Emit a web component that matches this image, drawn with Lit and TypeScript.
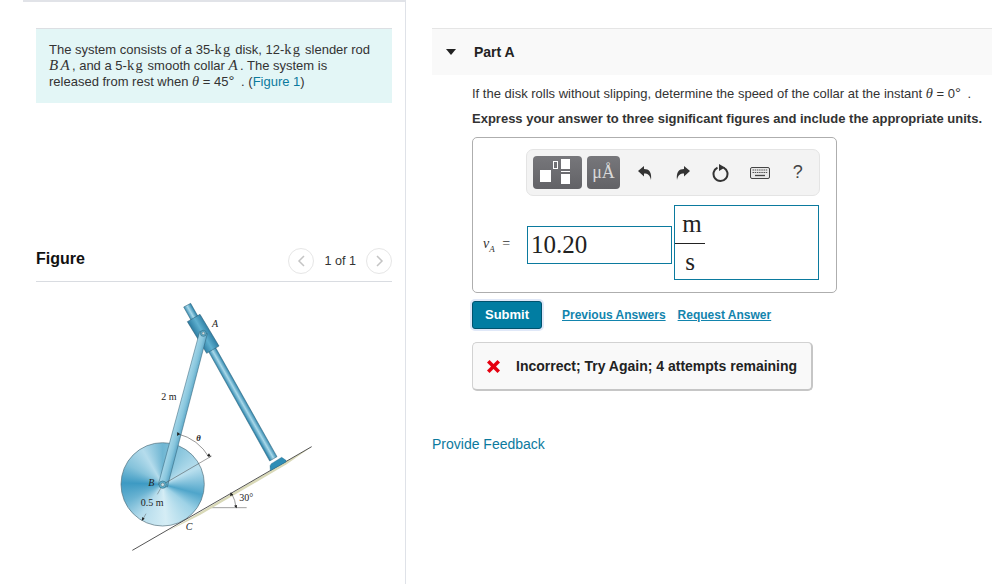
import { LitElement, html, css, svg } from "lit";
import { customElement } from "lit/decorators.js";

const diagram = svg`
<defs>
  <linearGradient id="rodG" gradientUnits="userSpaceOnUse" x1="381.6" y1="280.900" x2="402.400" y2="269.100"><stop offset="0" stop-color="#2f86ad"/><stop offset=".5" stop-color="#a9d9ea"/><stop offset="1" stop-color="#2f86ad"/></linearGradient>
  <linearGradient id="linkG" gradientUnits="userSpaceOnUse" x1="235.500" y1="350.400" x2="262.500" y2="357.600"><stop offset="0" stop-color="#a8d8ea"/><stop offset=".6" stop-color="#88c6dd"/><stop offset="1" stop-color="#5fa9c9"/></linearGradient>
  <linearGradient id="colG" gradientUnits="userSpaceOnUse" x1="289" y1="140" x2="331" y2="116"><stop offset="0" stop-color="#2a7aa0"/><stop offset=".5" stop-color="#5fb0cf"/><stop offset="1" stop-color="#2a7aa0"/></linearGradient>
</defs>
<foreignObject x="63" y="455" width="250" height="250"><div xmlns="http://www.w3.org/1999/xhtml" class="disk"></div></foreignObject>
<circle cx="188" cy="580" r="125" fill="none" stroke="#4c6b79" stroke-width="2"/>
<path d="M332 650 L440 650" stroke="#444" stroke-width="1.500" fill="none"/>
<path d="M200 722 L635 467 L560 520 L300 672 Z" fill="#d9d9b8"/>
<path d="M97 778 L635 467" stroke="#333" stroke-width="2.500"/>
<path d="M510 524 L514 518 L545 499 L558 508 L558 513 L511 539 Z" fill="#2f8db5" stroke="#1d5f7c"/>
<path d="M251 48 L272 37 L531 497 L509 510 Z" fill="url(#rodG)" stroke="#2d5c72" stroke-width="1.500"/>
<path d="M262 92 L300 70 L357 165 L320 187 Z" fill="url(#colG)" stroke="#22536a" stroke-width="1.500"/>
<path d="M299 122 L322 128 L202 588 L175 580 Z" fill="url(#linkG)" stroke="#2d5c72" stroke-width="1.500"/>
<circle cx="310" cy="127" r="9" fill="#5fb0cd" stroke="#23566c" stroke-width="1.500"/>
<circle cx="310" cy="127" r="4" fill="#cfe3ea" stroke="#333"/>
<circle cx="188" cy="581" r="11" fill="#5fb0cd" stroke="#23566c" stroke-width="1.500"/>
<circle cx="188" cy="581" r="5" fill="#cfe3ea" stroke="#333"/>
<path d="M198 575 L335 495" stroke="#444" stroke-width="1.500"/>
<path d="M232 428 A155 155 0 0 1 328 500" stroke="#333" stroke-width="1.500" fill="none"/>
<path d="M182 592 L172 610 M138 668 L128 686" stroke="#444" stroke-width="1.200"/>
<path d="M395 608 A95 95 0 0 1 408 650" stroke="#333" stroke-width="1.500" fill="none"/>
<g fill="#222">
  <path d="M232 423 l-1 12 l9 -6z M333 497 l-12 -2 l6 -8z M125 690 l2 -12 l7 5z M392 604 l8 8 l-10 3z M410 652 l-8 -8 l9 -2z"/>
</g>
<g font-family="'Liberation Serif',serif" fill="#222" font-size="30">
  <text x="184" y="326">2 m</text>
  <text x="122" y="645">0.5 m</text>
  <text x="418" y="631">30°</text>
  <text x="336" y="108" font-style="italic">A</text>
  <text x="145" y="585" font-style="italic">B</text>
  <text x="257" y="716" font-style="italic">C</text>
  <text x="289" y="451" font-style="italic" font-weight="bold" font-size="26">θ</text>
</g>`;

@customElement("app-root")
export class AppRoot extends LitElement {
  static styles = css`
    :host { display: block; width: 992px; height: 584px; overflow: hidden; background: #fff; color: #2b2b2b; font-family: "Liberation Sans", Arial, sans-serif; font-size: 13px; }
    .page { display: flex; height: 584px; }
    .left { width: 405px; height: 584px; border-right: 1px solid #dfe2e8; flex: none; }
    .topline { height: 2px; margin: 0 0 0 23px; background: #e1e3e8; }
    .info { margin: 26px 13px 0 36px; height: 75px; box-sizing: border-box; border-top: 1px solid #dcdfe3; background: #e3f6f6; padding: 13px 13px 0; line-height: 16px; font-size: 13px; color: #333; white-space: nowrap; }
    .ms { font-family: "Liberation Serif", serif; font-size: 14.500px; letter-spacing: 1.300px; line-height: 0; }
    .mi { font-family: "Liberation Serif", serif; font-style: italic; font-size: 15px; letter-spacing: 2.300px; line-height: 0; }
    .th { font-family: "Liberation Serif", serif; font-style: italic; font-size: 14.500px; line-height: 0; }
    .deg { font-size: 15px; line-height: 0; margin-right: 3px; }
    .link { color: #0b7a9e; }
    .fighead { display: flex; align-items: center; margin: 130px 13px 0 36px; height: 48px; border-bottom: 1px solid #d9dce1; }
    .fighead b { font-size: 16px; color: #111; flex: 1; position: relative; top: 2px; }
    .pager { display: flex; align-items: center; gap: 10px; font-size: 12.600px; color: #333; position: relative; top: 4px; }
    .circ { width: 24px; height: 24px; border: 1px solid #e6e6e6; border-radius: 50%; display: flex; align-items: center; justify-content: center; }
    .figure { display: block; margin: 9px 0 0 100px; width: 230px; height: 270px; }
    .disk { width: 250px; height: 250px; border-radius: 50%; background: conic-gradient(#6fb6d3 0deg, #8cc7de 30deg, #b9dfee 65deg, #4fa5ca 105deg, #9ed2e6 130deg, #d5edf5 175deg, #b5dcec 215deg, #6ab3d2 245deg, #3d9ac3 272deg, #86c3db 300deg, #b5dcec 330deg, #6fb6d3 360deg); }
    .right { flex: 1; padding-left: 26px; }
    .parthead { display: flex; align-items: center; margin-top: 28px; height: 47px; box-sizing: border-box; border-top: 1px solid #e5e5e5; background: #f9f9f9; font-weight: bold; font-size: 14px; color: #222; }
    .tri { width: 0; height: 0; margin: 0 18px 0 14px; border-left: 5.500px solid transparent; border-right: 5.500px solid transparent; border-top: 6px solid #222; }
    .body { padding-left: 40px; }
    .q { margin-top: 11px; height: 16px; line-height: 16px; font-size: 13px; color: #333; white-space: nowrap; }
    .q2 { margin-top: 9px; height: 16px; line-height: 16px; font-size: 13px; font-weight: bold; color: #333; white-space: nowrap; }
    .answer { margin-top: 10px; width: 365px; height: 156px; box-sizing: border-box; border: 1px solid #aeaeae; border-radius: 5px; padding: 11px 0 0 53px; }
    .toolbar { display: flex; align-items: center; width: 294px; height: 47px; box-sizing: border-box; border: 1px solid #e4e4e4; border-radius: 7px; background: #f3f3f3; padding-left: 6px; }
    .tbtn { height: 33px; border-radius: 4px; background: linear-gradient(#77777b, #626266); display: flex; align-items: center; justify-content: center; flex: none; }
    .t1 { width: 49px; margin-right: 5px; }
    .t2 { width: 33px; color: #d9d9d9; font-family: "Liberation Serif", serif; font-size: 18px; margin-right: 6px; }
    .tool { width: 38.200px; display: flex; justify-content: center; flex: none; }
    .help { font-size: 18px; color: #444; }
    .entry { display: flex; align-items: flex-start; margin: 9px 0 0 -43px; }
    .label { width: 44px; margin-top: 31px; font-family: "Liberation Serif", serif; font-style: italic; font-size: 14px; color: #333; white-space: nowrap; }
    .label sub { font-size: 9px; line-height: 0; }
    .label span { font-style: normal; margin-left: 4px; }
    .input { width: 145px; height: 38px; margin-top: 21px; box-sizing: border-box; border: 1px solid #0b7a9e; font-family: "Liberation Serif", serif; font-size: 25px; line-height: 36px; padding-left: 3px; color: #222; }
    .unit { width: 145px; height: 75px; box-sizing: border-box; margin-left: 2px; border: 1px solid #0b7a9e; font-family: "Liberation Serif", serif; font-size: 25px; color: #222; }
    .frac { width: 30px; display: flex; flex-direction: column; align-items: center; }
    .frac div { height: 37px; width: 100%; text-align: center; line-height: 36px; }
    .frac .num { border-bottom: 1px solid #222; height: 38px; box-sizing: border-box; text-indent: 4px; white-space: nowrap; }
    .actions { display: flex; align-items: center; margin-top: 7px; height: 29px; }
    .submit { width: 70px; height: 28px; box-sizing: border-box; border: 1px solid #00536e; border-radius: 3px; background: #017da2; color: #fff; font-weight: bold; font-size: 13px; display: flex; align-items: center; justify-content: center; box-shadow: 0 0 0 2px #e0e8f8; margin-right: 20px; }
    .alink { color: #1284ad; font-size: 12px; font-weight: bold; text-decoration: underline; margin-right: 12px; }
    .fb { display: flex; align-items: center; margin-top: 13px; width: 341px; height: 49px; box-sizing: border-box; border: 1px solid #d2d2d2; border-bottom: 2px solid #c6c6c6; border-right: 2px solid #c6c6c6; border-radius: 5px; background: #f9f9f9; padding-left: 13px; font-weight: bold; font-size: 14px; color: #222; }
    .fb svg { margin-right: 15px; flex: none; }
    .provide { margin-top: 44px; font-size: 14px; line-height: 18px; color: #0b7a9e; }
  `;

  render() {
    return html`<div class="page">
      <div class="left">
        <div class="topline"></div>
        <div class="info">The system consists of a 35-<span class="ms">kg</span> disk, 12-<span class="ms">kg</span> slender rod<br>
          <span class="mi">BA</span>, and a 5-<span class="ms">kg</span> smooth collar <span class="mi">A</span>. The system is<br>
          released from rest when <span class="th">θ</span> = 45<span class="deg">°</span> . (<span class="link">Figure 1</span>)</div>
        <div class="fighead"><b>Figure</b>
          <div class="pager">
            <span class="circ"><svg width="9" height="12" viewBox="0 0 9 12"><path d="M7 1 L2 6 L7 11" fill="none" stroke="#c4c4c4" stroke-width="1.500"/></svg></span>
            <span>1 of 1</span>
            <span class="circ"><svg width="9" height="12" viewBox="0 0 9 12"><path d="M2 1 L7 6 L2 11" fill="none" stroke="#c4c4c4" stroke-width="1.500"/></svg></span>
          </div>
        </div>
        <svg class="figure" viewBox="0 0 690 810">${diagram}</svg>
      </div>
      <div class="right">
        <div class="parthead"><span class="tri"></span>Part A</div>
        <div class="body">
          <div class="q">If the disk rolls without slipping, determine the speed of the collar at the instant <span class="th">θ</span> = 0<span class="deg">°</span> .</div>
          <div class="q2">Express your answer to three significant figures and include the appropriate units.</div>
          <div class="answer">
            <div class="toolbar">
              <div class="tbtn t1"><svg width="49" height="33" viewBox="0 0 49 33">
                <rect x="7" y="14" width="11" height="12" fill="#fff"/>
                <rect x="20.500" y="5.500" width="4" height="7" fill="none" stroke="#fff"/>
                <rect x="28" y="3" width="9" height="10" fill="#fff"/>
                <rect x="28" y="15" width="9" height="1" fill="#fff"/>
                <rect x="28" y="18" width="9" height="10" fill="#fff"/>
              </svg></div>
              <div class="tbtn t2">μÅ</div>
              <div class="tool"><svg width="16" height="16" viewBox="0 0 16 16"><path d="M1 6 L7 1 L7 4 C12 4 15 7 14 15 C13 10 11 8.500 7 8.500 L7 11.500 Z" fill="#333"/></svg></div>
              <div class="tool"><svg width="16" height="16" viewBox="0 0 16 16"><path d="M15 6 L9 1 L9 4 C4 4 1 7 2 15 C3 10 5 8.500 9 8.500 L9 11.500 Z" fill="#333"/></svg></div>
              <div class="tool"><svg width="18" height="18" viewBox="0 0 18 18"><path d="M11.500 3.600 A7 7 0 1 1 5.500 3.600" fill="none" stroke="#333" stroke-width="2"/><path d="M7 0 L13 3.500 L7 7 Z" fill="#333"/></svg></div>
              <div class="tool"><svg width="20" height="12" viewBox="0 0 20 12"><rect x=".5" y=".5" width="19" height="11" rx="1.500" fill="#e8e8e8" stroke="#444"/><path d="M2.500 3 H17.500 M2.500 5.500 H17.500" stroke="#555" stroke-dasharray="1.500 .7"/><path d="M5 8.500 H15" stroke="#444" stroke-width="1.300"/></svg></div>
              <div class="tool help">?</div>
            </div>
            <div class="entry">
              <span class="label">v<sub>A</sub><span> =</span></span>
              <div class="input">10.20</div>
              <div class="unit"><div class="frac"><div class="num">m</div><div>s</div></div></div>
            </div>
          </div>
          <div class="actions">
            <span class="submit">Submit</span>
            <span class="alink">Previous Answers</span>
            <span class="alink">Request Answer</span>
          </div>
          <div class="fb"><svg width="15" height="15" viewBox="0 0 15 15"><path d="M1 3.500 L3.500 1 L7.500 5 L11.500 1 L14 3.500 L10 7.500 L14 11.500 L11.500 14 L7.500 10 L3.500 14 L1 11.500 L5 7.500 Z" fill="#e5000f"/></svg>Incorrect; Try Again; 4 attempts remaining</div>
        </div>
        <div class="provide">Provide Feedback</div>
      </div>
    </div>`;
  }
}
